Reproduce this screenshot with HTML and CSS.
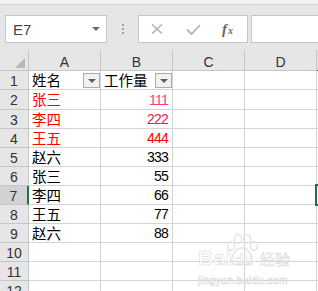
FILE: index.html
```html
<!DOCTYPE html>
<html lang="zh-CN">
<head>
    <meta charset="UTF-8">
    <title>工作量</title>
    <link rel="stylesheet" href="styles.css">
</head>
<body>
<div class="topline"></div>

<div class="bar">
    <div class="namebox">
        <span>E7</span>
        <span class="caret"></span>
    </div>
    <div class="dots"><i></i><i></i><i></i></div>
    <div class="fxbox">
        <svg width="12" height="10" viewBox="0 0 12 10"><path d="M1 0.5 L11 9.5 M11 0.5 L1 9.5" stroke="#b4b4b4" stroke-width="1.6" fill="none"/></svg>
        <svg width="15" height="11" viewBox="0 0 15 11"><path d="M1 5.5 L5.5 10 L14 1" stroke="#b4b4b4" stroke-width="1.8" fill="none"/></svg>
        <span class="fx">f<sub>x</sub></span>
    </div>
    <div class="input"></div>
</div>

<div class="sheet">
    <div class="corner"><span class="tri"></span></div>
    <div class="colhead">A</div>
    <div class="colhead">B</div>
    <div class="colhead">C</div>
    <div class="colhead">D</div>
    <div class="colhead cur"></div>

    <div class="rowhead">1</div>
    <div class="cell"><span>姓名</span><span class="filter"></span></div>
    <div class="cell"><span>工作量</span><span class="filter"></span></div>
    <div class="cell"></div><div class="cell"></div><div class="cell"></div>

    <div class="rowhead tall">2</div>
    <div class="cell red">张三</div>
    <div class="cell num pink">111</div>
    <div class="cell"></div><div class="cell"></div><div class="cell"></div>

    <div class="rowhead">3</div>
    <div class="cell red">李四</div>
    <div class="cell num rose">222</div>
    <div class="cell"></div><div class="cell"></div><div class="cell"></div>

    <div class="rowhead">4</div>
    <div class="cell red">王五</div>
    <div class="cell num red">444</div>
    <div class="cell"></div><div class="cell"></div><div class="cell"></div>

    <div class="rowhead">5</div>
    <div class="cell">赵六</div>
    <div class="cell num">333</div>
    <div class="cell"></div><div class="cell"></div><div class="cell"></div>

    <div class="rowhead">6</div>
    <div class="cell">张三</div>
    <div class="cell num">55</div>
    <div class="cell"></div><div class="cell"></div><div class="cell"></div>

    <div class="rowhead cur">7</div>
    <div class="cell">李四</div>
    <div class="cell num">66</div>
    <div class="cell"></div><div class="cell"></div><div class="cell"></div>

    <div class="rowhead">8</div>
    <div class="cell">王五</div>
    <div class="cell num">77</div>
    <div class="cell"></div><div class="cell"></div><div class="cell"></div>

    <div class="rowhead">9</div>
    <div class="cell">赵六</div>
    <div class="cell num">88</div>
    <div class="cell"></div><div class="cell"></div><div class="cell"></div>

    <div class="rowhead">10</div>
    <div class="cell"></div><div class="cell"></div><div class="cell"></div><div class="cell"></div><div class="cell"></div>

    <div class="rowhead">11</div>
    <div class="cell"></div><div class="cell"></div><div class="cell"></div><div class="cell"></div><div class="cell"></div>

    <div class="rowhead">12</div>
    <div class="cell"></div><div class="cell"></div><div class="cell"></div><div class="cell"></div><div class="cell"></div>

    <div class="selected"></div>
    <div class="watermark">
        <svg class="paw" width="40" height="34" viewBox="0 0 40 34">
            <g fill="none" stroke="#e4e4e4" stroke-width="1.4">
                <ellipse cx="9" cy="12" rx="3.5" ry="4.5"/>
                <ellipse cx="16" cy="5" rx="3.5" ry="4.5"/>
                <ellipse cx="25" cy="5" rx="3.5" ry="4.5"/>
                <ellipse cx="32" cy="12" rx="3.5" ry="4.5"/>
                <path d="M20 14 C13 14 9 23 10 28 C11 32 16 31 20 30 C24 31 29 32 30 28 C31 23 27 14 20 14 Z"/>
            </g>
        </svg>
        <div class="wm1"><b>Bai</b><b class="du">du</b><span>经验</span></div>
        <div class="wm2">jingyan.baidu.com</div>
    </div>
</div>
</body>
</html>
```

FILE: styles.css
```css
body {
    margin: 0;
    background-color: #e6e6e6;
    font-family: "Noto Sans CJK SC", sans-serif;
    color: #000;
    overflow: hidden;
}
.topline {
    height: 4px;
    background-color: #f3f3f3;
    border-bottom: 1px solid #d5d5d5;
}
.bar {
    display: flex;
    height: 28px;
    margin-top: 10px;
    margin-bottom: 7px;
}
.namebox {
    box-sizing: border-box;
    width: 102px;
    margin-left: 5px;
    background-color: #fff;
    border: 1px solid #c6c6c6;
    display: flex;
    align-items: center;
    justify-content: space-between;
    padding: 0 6px 0 7px;
    font-family: "Liberation Sans", sans-serif;
    font-size: 15px;
    color: #444;
}
.caret {
    width: 0;
    height: 0;
    border-left: 4px solid transparent;
    border-right: 4px solid transparent;
    border-top: 4px solid #6a6a6a;
}
.dots {
    width: 31px;
    display: flex;
    flex-direction: column;
    align-items: center;
    justify-content: center;
    gap: 2px;
}
.dots i {
    display: block;
    width: 2px;
    height: 2px;
    background-color: #a0a0a0;
}
.fxbox {
    box-sizing: border-box;
    width: 110px;
    background-color: #fff;
    border: 1px solid #c6c6c6;
    display: flex;
    align-items: center;
    padding-left: 12px;
    gap: 23px;
}
.fx {
    font-family: "Liberation Serif", serif;
    font-style: italic;
    font-weight: bold;
    font-size: 15px;
    color: #666;
    margin-left: -2px;
}
.fx sub {
    font-size: 10px;
    vertical-align: 0;
    margin-left: 1px;
}
.input {
    flex: 1;
    margin-left: 3px;
    background-color: #fff;
    border: 1px solid #c6c6c6;
    border-right: none;
}
.sheet {
    position: relative;
    display: grid;
    grid-template-columns: 29px 72px 72px 72px 72px 1fr;
    grid-template-rows: 21px 19px 20px repeat(10, 19px);
    background-color: #fff;
}
.sheet > div {
    box-sizing: border-box;
}
.corner, .colhead, .rowhead {
    background-color: #e6e6e6;
    border-right: 1px solid #c6c6c6;
    border-bottom: 1px solid #c6c6c6;
    color: #333;
    font-family: "Liberation Sans", sans-serif;
    font-size: 14px;
    display: flex;
    align-items: center;
    justify-content: center;
}
.corner {
    position: relative;
}
.tri {
    position: absolute;
    right: 3px;
    bottom: 2px;
    width: 0;
    height: 0;
    border-left: 10px solid transparent;
    border-bottom: 10px solid #b8b8b8;
}
.colhead {
    padding-top: 3px;
}
.colhead.cur {
    border-bottom: 1px solid #217346;
    border-right: none;
}
.rowhead {
    padding-top: 1px;
}
.rowhead.cur {
    background-color: #d2d2d2;
    border-right: 2px solid #217346;
}
.cell {
    border-right: 1px solid #d4d4d4;
    border-bottom: 1px solid #d4d4d4;
    font-size: 14.5px;
    line-height: 1;
    padding: 0 3px;
    display: flex;
    align-items: center;
    white-space: nowrap;
    min-width: 0;
}
.num {
    justify-content: flex-end;
    font-family: "Liberation Sans", sans-serif;
    font-size: 14px;
    letter-spacing: -0.8px;
    padding-right: 4px;
}
.red { color: #ff0000; }
.pink { color: #ff3d84; }
.rose { color: #f5104a; }
.filter {
    box-sizing: border-box;
    margin-left: auto;
    margin-right: -3px;
    align-self: flex-start;
    margin-top: 2px;
    width: 17px;
    height: 15px;
    border: 1px solid #adadad;
    background-color: #f2f2f2;
    display: flex;
    align-items: center;
    justify-content: center;
}
.filter::after {
    content: "";
    border-left: 4px solid transparent;
    border-right: 4px solid transparent;
    border-top: 4px solid #5f5f5f;
}
.selected {
    position: absolute;
    left: 315px;
    top: 134px;
    width: 8px;
    height: 22px;
    border: 2px solid #217346;
}
.watermark {
    position: absolute;
    left: 198px;
    top: 184px;
    width: 110px;
    color: #e2e2e2;
    -webkit-text-stroke: 0.5px #d6d6d6;
}
.paw {
    position: absolute;
    left: 24px;
    top: 0;
}
.wm1 {
    position: relative;
    margin-top: 12px;
    font-family: "Liberation Sans", sans-serif;
    font-size: 21px;
    line-height: 24px;
    letter-spacing: 0.5px;
    color: rgba(255,255,255,0.6);
}
.wm1 .du {
    font-size: 15px;
    margin-left: 2px;
}
.wm1 span {
    font-family: "Noto Sans CJK SC", sans-serif;
    font-size: 15px;
    margin-left: 6px;
}
.wm2 {
    font-family: "Liberation Sans", sans-serif;
    font-size: 10.5px;
    margin-top: 2px;
    letter-spacing: 0.3px;
    color: rgba(255,255,255,0.6);
}
```
